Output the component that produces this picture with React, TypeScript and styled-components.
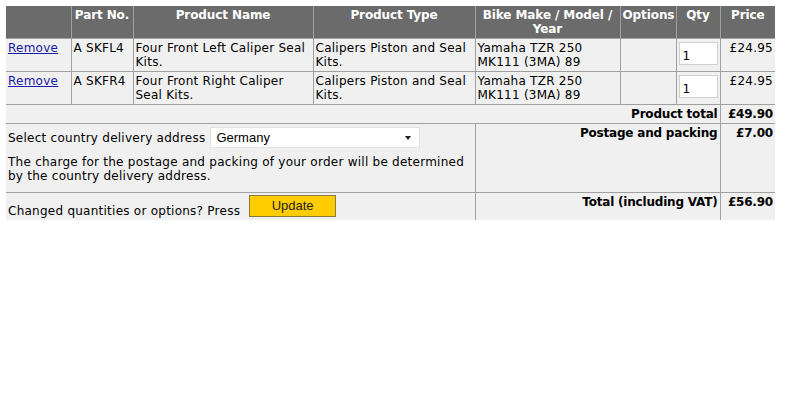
import React from "react";
import styled, { createGlobalStyle } from "styled-components";

const Global = createGlobalStyle`
  html, body { margin: 0; padding: 0; background: #fff; }
  body { font-family: "DejaVu Sans", Verdana, sans-serif; font-size: 12px; color: #000; }
`;

const Page = styled.div`
  padding: 6px;
`;

const Table = styled.table`
  width: 769px;
  table-layout: fixed;
  border-collapse: collapse;
  font-size: 12px;
  line-height: 14px;
`;

const Th = styled.th`
  background: #6b6b6b;
  color: #fff;
  font-weight: bold;
  text-align: center;
  vertical-align: top;
  padding: 2px 2px;
  letter-spacing: -0.1px;
  border-left: 1px solid #a0a0a0;
  &:first-child { border-left: none; }
`;

const Td = styled.td<{ $align?: string; $bold?: boolean }>`
  background: #f0f0f0;
  vertical-align: top;
  padding: 2px 2px;
  border-top: 1px solid #a0a0a0;
  border-left: 1px solid #a0a0a0;
  text-align: ${(p) => p.$align || "left"};
  font-weight: ${(p) => (p.$bold ? "bold" : "normal")};
  letter-spacing: ${(p) => (p.$bold ? "-0.2px" : "0.25px")};
  &:first-child { border-left: none; }
`;

const RemoveLink = styled.a`
  color: #1a1aa8;
  text-decoration: underline;
  cursor: pointer;
`;

const QtyInput = styled.input`
  display: block;
  width: 39px;
  height: 23px;
  box-sizing: border-box;
  border: 1px solid #d0d0d0;
  background: #fff;
  font-family: "DejaVu Sans", Verdana, sans-serif;
  font-size: 12px;
  padding: 4px 3px 0;
  margin: 1px 0 0;
`;

const SelectLine = styled.div`
  display: flex;
  align-items: center;
  gap: 5px;
  margin-top: 1px;
`;

const Select = styled.div`
  width: 210px;
  height: 21px;
  box-sizing: border-box;
  background: #fff;
  border: 1px solid #e2e2e2;
  display: flex;
  align-items: center;
  justify-content: space-between;
  padding: 0 8px 0 5px;
  font-family: "Liberation Sans", Arial, sans-serif;
  font-size: 13px;
  letter-spacing: 0;
`;

const Arrow = styled.span`
  width: 0;
  height: 0;
  border-left: 3.5px solid transparent;
  border-right: 3.5px solid transparent;
  border-top: 4px solid #222;
`;

const Note = styled.p`
  margin: 7px 0 7px;
`;

const UpdateLine = styled.div`
  display: flex;
  align-items: flex-end;
  gap: 9px;
  height: 23px;
`;

const UpdateButton = styled.button`
  align-self: flex-start;
  width: 87px;
  height: 22px;
  background: #ffcc00;
  border: 1px solid #8a7a3a;
  font-family: "Liberation Sans", Arial, sans-serif;
  font-size: 13px;
  letter-spacing: 0;
  color: #222;
  padding: 0 0 2px;
`;

const items = [
  {
    part: "A SKFL4",
    name: "Four Front Left Caliper Seal Kits.",
    type: "Calipers Piston and Seal Kits.",
    bike: "Yamaha TZR 250 MK111 (3MA) 89",
    qty: "1",
    price: "£24.95",
  },
  {
    part: "A SKFR4",
    name: "Four Front Right Caliper Seal Kits.",
    type: "Calipers Piston and Seal Kits.",
    bike: "Yamaha TZR 250 MK111 (3MA) 89",
    qty: "1",
    price: "£24.95",
  },
];

export default function App() {
  return (
    <Page>
      <Global />
      <Table>
        <colgroup>
          <col style={{ width: 65 }} />
          <col style={{ width: 62 }} />
          <col style={{ width: 180 }} />
          <col style={{ width: 162 }} />
          <col style={{ width: 145 }} />
          <col style={{ width: 56 }} />
          <col style={{ width: 44 }} />
          <col style={{ width: 55 }} />
        </colgroup>
        <thead>
          <tr>
            <Th></Th>
            <Th>Part No.</Th>
            <Th>Product Name</Th>
            <Th>Product Type</Th>
            <Th>Bike Make / Model / Year</Th>
            <Th>Options</Th>
            <Th>Qty</Th>
            <Th>Price</Th>
          </tr>
        </thead>
        <tbody>
          {items.map((it) => (
            <tr key={it.part}>
              <Td>
                <RemoveLink href="#">Remove</RemoveLink>
              </Td>
              <Td>{it.part}</Td>
              <Td>{it.name}</Td>
              <Td>{it.type}</Td>
              <Td>{it.bike}</Td>
              <Td></Td>
              <Td>
                <QtyInput defaultValue={it.qty} />
              </Td>
              <Td $align="right">{it.price}</Td>
            </tr>
          ))}
          <tr>
            <Td colSpan={7} $align="right" $bold>
              Product total
            </Td>
            <Td $align="right" $bold>
              £49.90
            </Td>
          </tr>
          <tr>
            <Td colSpan={4}>
              <SelectLine>
                Select country delivery address
                <Select>
                  Germany
                  <Arrow />
                </Select>
              </SelectLine>
              <Note>
                The charge for the postage and packing of your order will be determined by the
                country delivery address.
              </Note>
            </Td>
            <Td colSpan={3} $align="right" $bold>
              Postage and packing
            </Td>
            <Td $align="right" $bold>
              £7.00
            </Td>
          </tr>
          <tr>
            <Td colSpan={4}>
              <UpdateLine>
                Changed quantities or options? Press
                <UpdateButton>Update</UpdateButton>
              </UpdateLine>
            </Td>
            <Td colSpan={3} $align="right" $bold>
              Total (including VAT)
            </Td>
            <Td $align="right" $bold>
              £56.90
            </Td>
          </tr>
        </tbody>
      </Table>
    </Page>
  );
}
